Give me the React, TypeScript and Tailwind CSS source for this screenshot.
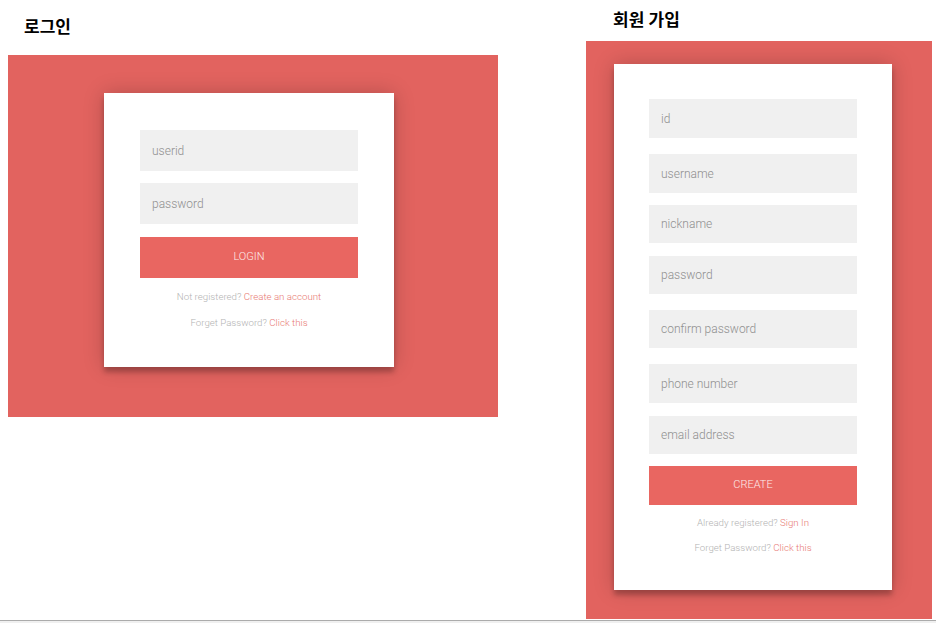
import React from "react";

const font = { fontFamily: 'Roboto, "Noto Sans CJK KR", sans-serif' };

function Field({ placeholder, className }: { placeholder: string; className: string }) {
	return (
		<input
			readOnly
			placeholder={placeholder}
			className={`block w-full bg-[#f0f0f0] px-3 text-[12px] font-light outline-none placeholder:text-[#8f8f8f] ${className}`}
		/>
	);
}

function Helper({ text, link, className }: { text: string; link: string; className: string }) {
	return (
		<p className={`text-center text-[9.7px] leading-[12px] font-light text-[#b3b3b3] ${className}`}>
			{text} <span className="text-[#e87a74]">{link}</span>
		</p>
	);
}

function LoginCard() {
	return (
		<div className="ml-[96px] mt-[38px] w-[290px] h-[274px] bg-white px-[36px] pt-[37px] shadow-[0_0_20px_rgba(0,0,0,0.2),0_5px_5px_rgba(0,0,0,0.24)]">
			<Field placeholder="userid" className="h-[41px] mb-[12px]" />
			<Field placeholder="password" className="h-[41px] mb-[13px]" />
			<button className="w-full h-[41px] bg-[#e96661] text-[11px] text-[#fdecea] font-light uppercase">login</button>
			<Helper text="Not registered?" link="Create an account" className="mt-[13px]" />
			<Helper text="Forget Password?" link="Click this" className="mt-[14px]" />
		</div>
	);
}

function SignupCard() {
	return (
		<div className="ml-[28px] mt-[23px] w-[278px] h-[526px] bg-white px-[35px] pt-[35px] shadow-[0_0_20px_rgba(0,0,0,0.2),0_5px_5px_rgba(0,0,0,0.24)]">
			<Field placeholder="id" className="h-[39px] mb-[16px]" />
			<Field placeholder="username" className="h-[39px] mb-[12px]" />
			<Field placeholder="nickname" className="h-[38px] mb-[13px]" />
			<Field placeholder="password" className="h-[38px] mb-[16px]" />
			<Field placeholder="confirm password" className="h-[38px] mb-[16px]" />
			<Field placeholder="phone number" className="h-[39px] mb-[13px]" />
			<Field placeholder="email address" className="h-[38px] mb-[12px]" />
			<button className="w-full h-[39px] bg-[#e96661] text-[11px] text-[#fdecea] font-light uppercase">create</button>
			<Helper text="Already registered?" link="Sign In" className="mt-[12px]" />
			<Helper text="Forget Password?" link="Click this" className="mt-[13px]" />
		</div>
	);
}

export default function App() {
	return (
		<div className="w-[936px] h-[623px] bg-white flex flex-col overflow-hidden" style={font}>
			<div className="h-[620px] flex items-start">
				<section className="ml-[8px] w-[490px]">
					<h2 className="h-[55px] flex items-center pl-[16px] text-[17px] font-bold text-black">로그인</h2>
					<div className="h-[362px] bg-[#e2635f] flex items-start">
						<LoginCard />
					</div>
				</section>
				<section className="ml-[88px] w-[346px]">
					<h2 className="h-[41px] flex items-center pl-[27px] text-[17px] font-bold text-black">회원 가입</h2>
					<div className="h-[578px] bg-[#e2635f] flex items-start">
						<SignupCard />
					</div>
				</section>
			</div>
			<div className="h-px bg-[#ababab]" />
			<div className="flex-1 bg-[#f0f0f0]" />
		</div>
	);
}
